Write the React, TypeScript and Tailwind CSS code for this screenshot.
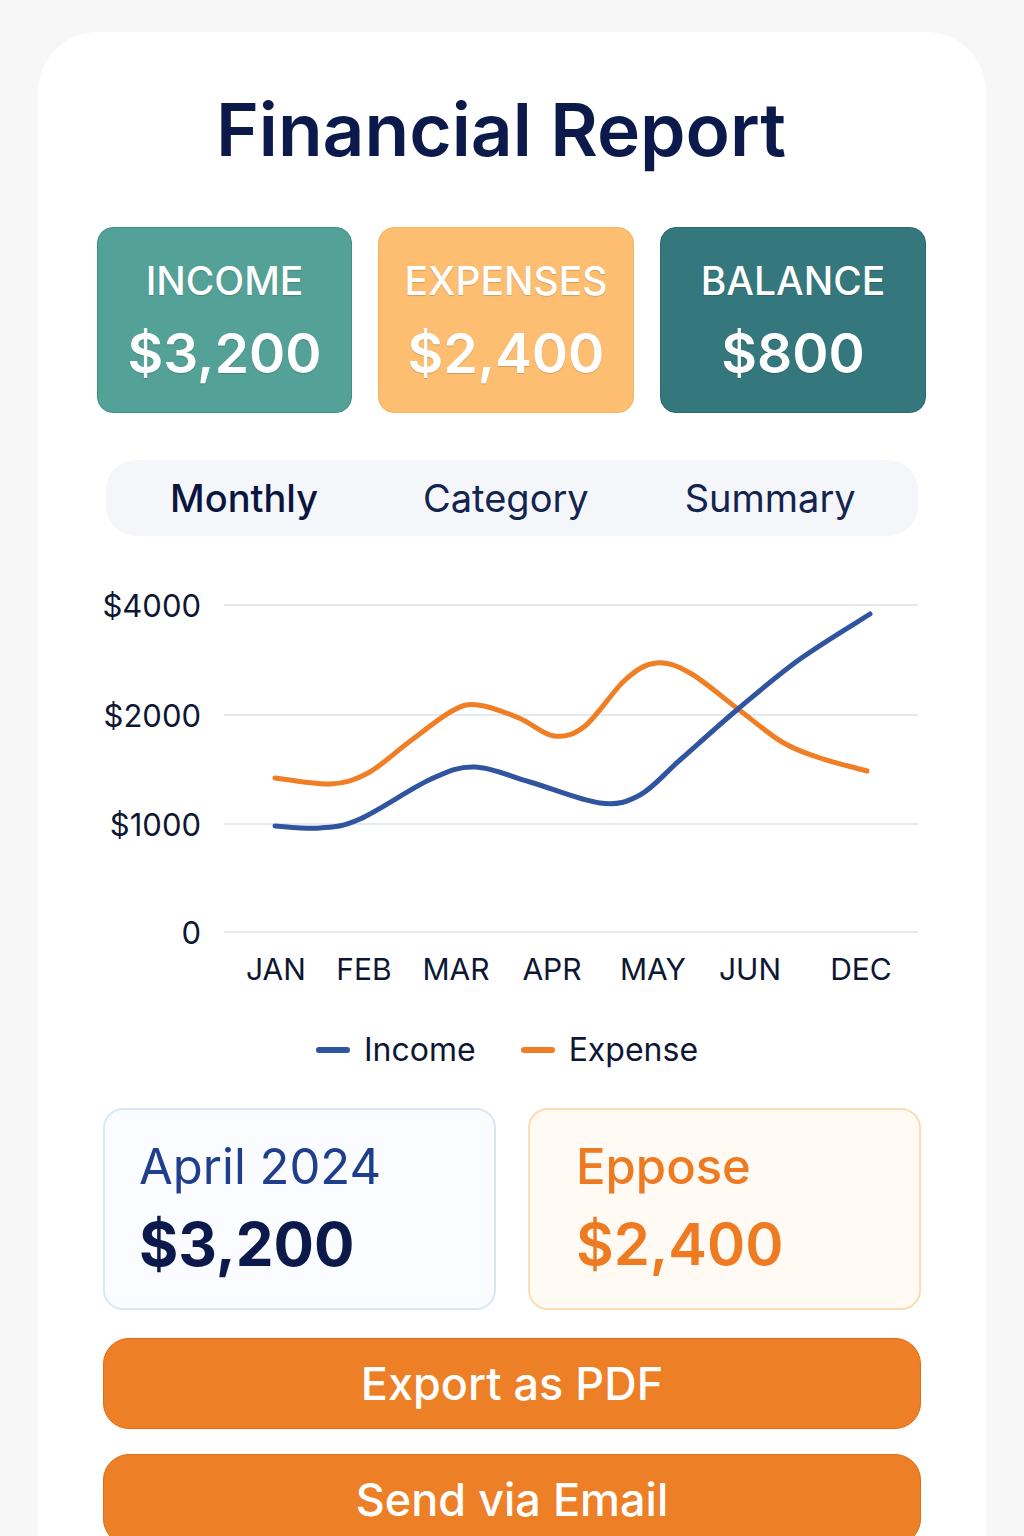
type Pt = [number, number]

const INCOME: Pt[] = [
  [275, 826], [320, 828], [360, 819], [431, 779], [475, 767], [530, 782],
  [600, 803], [640, 795], [680, 760], [738, 709], [800, 659], [870, 614],
]

const EXPENSE: Pt[] = [
  [275, 778], [330, 784], [368, 773], [409, 742], [452, 711], [478, 705],
  [519, 718], [554, 736], [585, 726], [625, 680], [656, 663], [690, 673],
  [738, 709], [782, 742], [820, 758], [867, 771],
]

// catmull-rom -> cubic bezier
function smooth(pts: Pt[]) {
  let d = `M${pts[0][0]},${pts[0][1]}`
  for (let i = 0; i < pts.length - 1; i++) {
    const p0 = pts[i - 1] ?? pts[i]
    const p1 = pts[i]
    const p2 = pts[i + 1]
    const p3 = pts[i + 2] ?? p2
    const c1x = p1[0] + (p2[0] - p0[0]) / 6
    const c1y = p1[1] + (p2[1] - p0[1]) / 6
    const c2x = p2[0] - (p3[0] - p1[0]) / 6
    const c2y = p2[1] - (p3[1] - p1[1]) / 6
    d += ` C${c1x.toFixed(1)},${c1y.toFixed(1)} ${c2x.toFixed(1)},${c2y.toFixed(1)} ${p2[0]},${p2[1]}`
  }
  return d
}

const Y_TICKS = [
  { label: '$4000', y: 605 },
  { label: '$2000', y: 715 },
  { label: '$1000', y: 824 },
  { label: '0', y: 932 },
]

const MONTHS = [
  { label: 'JAN', x: 276 },
  { label: 'FEB', x: 364 },
  { label: 'MAR', x: 456 },
  { label: 'APR', x: 552 },
  { label: 'MAY', x: 653 },
  { label: 'JUN', x: 750 },
  { label: 'DEC', x: 861 },
]

function Chart() {
  return (
    <svg width="817" height="420" viewBox="103 580 817 420" className="block">
      {Y_TICKS.map((t) => (
        <g key={t.label}>
          <line x1="224" x2="918" y1={t.y} y2={t.y} stroke="#dde3e6" strokeWidth="1.5" />
          <text x="201" y={t.y + 12} textAnchor="end" fontSize="31" fill="#0d1733" fontFamily="Inter, sans-serif">
            {t.label}
          </text>
        </g>
      ))}
      {MONTHS.map((m) => (
        <text key={m.label} x={m.x} y="980" textAnchor="middle" fontSize="30" fill="#0d1733" fontFamily="Inter, sans-serif">
          {m.label}
        </text>
      ))}
      <path d={smooth(EXPENSE)} fill="none" stroke="#f07e24" strokeWidth="5" strokeLinecap="round" />
      <path d={smooth(INCOME)} fill="none" stroke="#2f54a0" strokeWidth="5" strokeLinecap="round" />
    </svg>
  )
}

function StatCard({ label, value, className }: { label: string; value: string; className: string }) {
  return (
    <div className={`flex h-[186px] flex-col items-center rounded-[16px] border pt-[33px] text-white [text-shadow:0_1px_1px_rgba(0,0,0,0.18)] ${className}`}>
      <div className="text-[39px] font-medium leading-none">{label}</div>
      <div className="mt-[26px] text-[55px] font-semibold leading-none">{value}</div>
    </div>
  )
}

export default function App() {
  return (
    <div className="min-h-screen bg-[#f7f7f7] px-[38px] pt-[32px] font-[Inter,'Noto_Sans',sans-serif]">
      <div className="rounded-t-[60px] bg-white px-[65px] pb-[60px] pt-[61px]">
        <h1 className="pr-[22px] text-center text-[73px] font-semibold leading-none text-[#0b1a4a]">Financial Report</h1>

        <div className="-mx-[6px] mt-[61px] flex gap-[26px]">
          <StatCard label="INCOME" value="$3,200" className="w-[255px] border-[#3f8f86] bg-[#53a197]" />
          <StatCard label="EXPENSES" value="$2,400" className="w-[256px] border-[#f6b25f] bg-[#fdbe71]" />
          <StatCard label="BALANCE" value="$800" className="w-[266px] border-[#2a6a70] bg-[#34787e]" />
        </div>

        <div className="mx-[3px] mt-[47px] flex h-[76px] items-center rounded-[30px] bg-[#f5f6fa] pl-[64px] text-[38px] leading-none text-[#13244f]">
          <span className="font-medium text-[#0a1640]">Monthly</span>
          <span className="ml-[105px]">Category</span>
          <span className="ml-[96px]">Summary</span>
        </div>

        <div className="mt-[44px]">
          <Chart />
        </div>

        <div className="mt-[30px] flex h-[40px] items-center justify-center pr-[10px] text-[32px] text-[#0d1733]">
          <span className="h-[6px] w-[34px] rounded-full bg-[#2f54a0]" />
          <span className="ml-[14px]">Income</span>
          <span className="ml-[45px] h-[6px] w-[34px] rounded-full bg-[#f07e24]" />
          <span className="ml-[14px]">Expense</span>
        </div>

        <div className="mt-[38px] grid grid-cols-2 gap-[32px]">
          <div className="h-[202px] rounded-[20px] border-2 border-[#dbe7f9] bg-[#fbfcff] pl-[34px] pt-[32px]">
            <div className="text-[49px] leading-none text-[#1f3f8c]">April 2024</div>
            <div className="mt-[23px] text-[60px] font-bold leading-none text-[#0b1a4a]">$3,200</div>
          </div>
          <div className="h-[202px] rounded-[20px] border-2 border-[#fcdcb3] bg-[#fffaf3] pl-[46px] pt-[32px] text-[#ee7a22]">
            <div className="text-[49px] font-medium leading-none">Eppose</div>
            <div className="mt-[24px] text-[58px] font-semibold leading-none">$2,400</div>
          </div>
        </div>

        <button className="mt-[28px] flex h-[91px] w-full items-center justify-center rounded-[26px] border border-[#e36c14] bg-[#ed7f27] text-[45px] font-medium text-white">
          Export as PDF
        </button>
        <button className="mt-[25px] flex h-[91px] w-full items-center justify-center rounded-[26px] border border-[#e36c14] bg-[#ed7f27] text-[45px] font-medium text-white">
          Send via Email
        </button>
      </div>
    </div>
  )
}
